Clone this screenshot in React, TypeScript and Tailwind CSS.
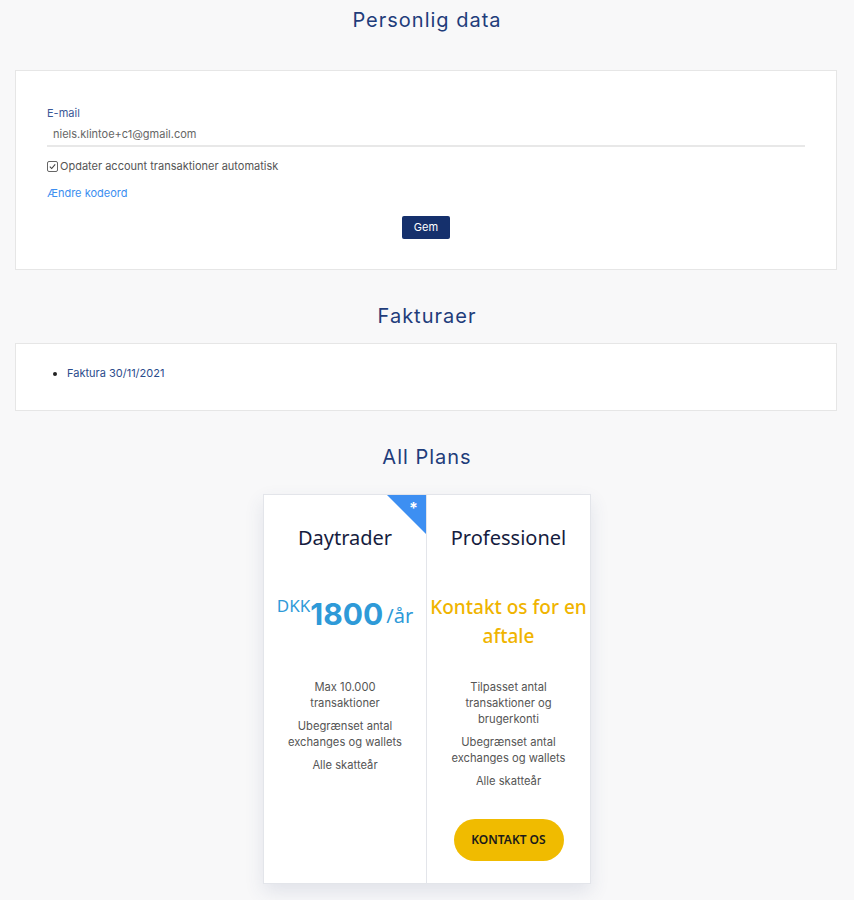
const body = { fontFamily: "Inter, 'Open Sans', sans-serif" };
const heading = { fontFamily: "'Noto Sans', 'Open Sans', sans-serif" };

const SectionTitle = ({ children }: { children: string }) => (
  <h2 className="text-center text-[20px] leading-[28px] tracking-[1px] text-[#1f3d7b]" style={body}>
    {children}
  </h2>
);

const App = () => {
  return (
    <div className="min-h-[900px] bg-[#f8f8f9] pt-[6px]" style={body}>
      <SectionTitle>Personlig data</SectionTitle>

      {/* Personal data */}
      <div className="ml-[15px] mr-[17px] mt-[36px] border border-[#e6e6e6] bg-white px-[31px] pt-[34px] pb-[30px]">
        <label className="block text-[11px] leading-[16px] text-[#3a5796]">E-mail</label>
        <div className="h-[26px] border-b-2 border-[#e8e8e8] px-[6px] text-[11px] leading-[26px] text-[#666]">
          niels.klintoe+c1@gmail.com
        </div>
        <div className="mt-[11px] flex items-center gap-[2px] text-[11px] leading-[16px] text-[#555]">
          <span className="flex h-[11px] w-[11px] items-center justify-center rounded-[2px] border border-[#666] bg-white">
            <svg viewBox="0 0 10 10" className="h-[9px] w-[9px]">
              <path d="M2 5.2 L4.1 7.3 L8 2.6" fill="none" stroke="#444" strokeWidth="1.2" />
            </svg>
          </span>
          Opdater account transaktioner automatisk
        </div>
        <a href="#" className="mt-[11px] block text-[11px] leading-[16px] text-[#3b8ef0]">
          Ændre kodeord
        </a>
        <div className="mt-[15px] flex justify-center">
          <button className="h-[23px] w-[48px] rounded-[2px] bg-[#15306c] text-[11px] text-white">Gem</button>
        </div>
      </div>

      <div className="mt-[32px]">
        <SectionTitle>Fakturaer</SectionTitle>
      </div>

      {/* Invoices */}
      <div className="ml-[15px] mr-[17px] mt-[13px] border border-[#e6e6e6] bg-white pt-[21px] pb-[29px]">
        <ul className="list-disc pl-[51px] text-[11px] leading-[16px] marker:text-[#222]">
          <li>
            <a href="#" className="text-[#2b4c8c]">Faktura 30/11/2021</a>
          </li>
        </ul>
      </div>

      <div className="mt-[32px]">
        <SectionTitle>All Plans</SectionTitle>
      </div>

      {/* Plans */}
      <div className="mt-[23px] flex justify-center">
        <div className="flex w-[328px] border border-[#e3e5ea] bg-white shadow-[0_8px_18px_rgba(60,70,120,0.12)]">
          <div className="relative flex w-[164px] flex-col items-center border-r border-[#e3e5ea] pt-[30px]">
            <div className="absolute right-0 top-0 h-[39px] w-[39px] bg-[#3d8ff2] [clip-path:polygon(0_0,100%_0,100%_100%)]" />
            <span className="absolute right-[8px] top-[5px] text-[16px] font-bold leading-[16px] text-white">*</span>
            <h3 className="text-[20px] leading-[26px] text-[#161c3e]" style={heading}>Daytrader</h3>
            <div className="mt-[42px] flex h-[86px] items-start justify-center text-[#2e9ad8]">
              <span className="text-[17px] leading-[26px]" style={heading}>DKK</span>
              <span className="text-[30px] font-bold leading-[42px]">1800</span>
              <span className="ml-[3px] mt-[8px] text-[20px] leading-[30px]" style={heading}>/år</span>
            </div>
            <div className="flex flex-col gap-[7px] text-center text-[11.2px] leading-[16px] text-[#555]">
              <p>Max 10.000<br />transaktioner</p>
              <p>Ubegrænset antal<br />exchanges og wallets</p>
              <p>Alle skatteår</p>
            </div>
          </div>

          <div className="flex w-[164px] flex-col items-center pt-[30px] pb-[22px]">
            <h3 className="text-[20px] leading-[26px] text-[#161c3e]" style={heading}>Professionel</h3>
            <div
              className="mt-[42px] h-[86px] whitespace-nowrap text-center text-[19px] font-medium leading-[29px] text-[#f0b400]"
              style={heading}
            >
              Kontakt os for en<br />aftale
            </div>
            <div className="flex flex-col gap-[7px] text-center text-[11.2px] leading-[16px] text-[#555]">
              <p>Tilpasset antal<br />transaktioner og<br />brugerkonti</p>
              <p>Ubegrænset antal<br />exchanges og wallets</p>
              <p>Alle skatteår</p>
            </div>
            <button
              className="mt-[30px] h-[42px] w-[110px] rounded-full bg-[#f0bb00] text-[12px] font-semibold text-[#1a1a1a]"
              style={heading}
            >
              KONTAKT OS
            </button>
          </div>
        </div>
      </div>
    </div>
  );
};

export default App;
